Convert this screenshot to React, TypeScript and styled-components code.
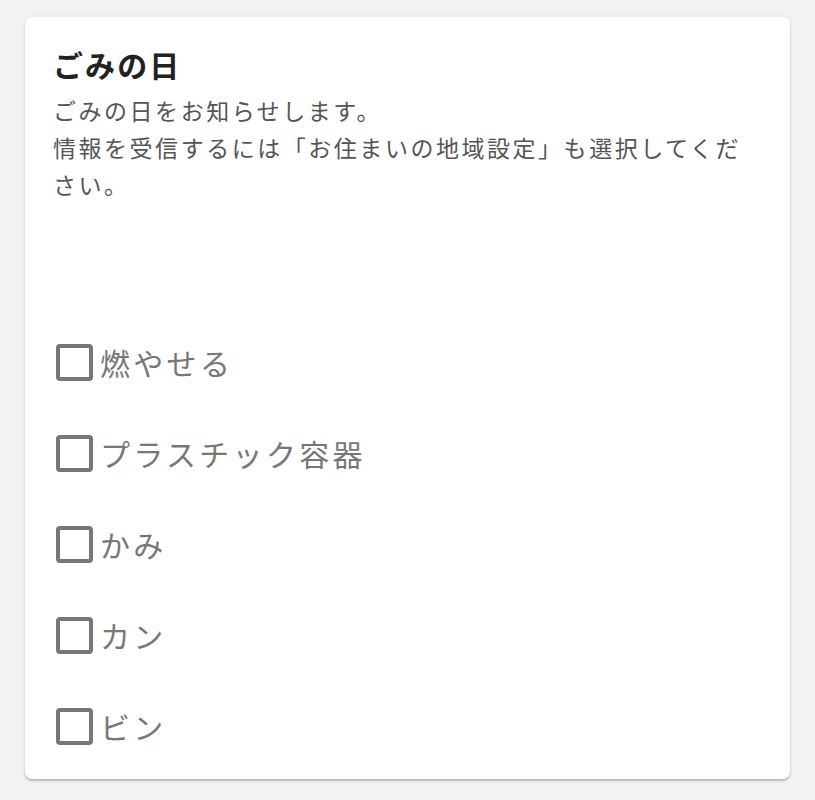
import React from 'react';
import styled, { createGlobalStyle } from 'styled-components';

const GlobalStyle = createGlobalStyle`
  html, body {
    margin: 0;
    background: #f1f2f4;
    font-family: "Noto Sans CJK JP", "Noto Sans", sans-serif;
  }
`;

const Page = styled.main`
  padding: 17px 25px 20px;
`;

const Card = styled.section`
  background: #fff;
  border-radius: 7px;
  padding: 28px 30px 34px 28px;
  box-shadow: 0 2px 2px rgba(0, 0, 0, 0.22), 0 0 6px rgba(0, 0, 0, 0.05);
`;

const Title = styled.h2`
  margin: 0 0 8px;
  font-size: 30px;
  line-height: 39px;
  font-weight: 700;
  color: #222;
  letter-spacing: 0.07em;
`;

const Description = styled.p`
  margin: 0;
  font-size: 23px;
  line-height: 37px;
  color: #555;
  letter-spacing: 0.11em;
`;

const OptionList = styled.ul`
  list-style: none;
  margin: 141px 0 0;
  padding: 0 0 0 3px;
  display: flex;
  flex-direction: column;
  gap: 54px;
`;

const Option = styled.li`
  display: flex;
  align-items: center;
  gap: 7px;
  height: 37px;
`;

const Box = styled.input.attrs({ type: 'checkbox' })`
  appearance: none;
  margin: 0;
  width: 37px;
  height: 37px;
  box-sizing: border-box;
  border: 4px solid #777;
  border-radius: 4px;
  background: #fff;
  cursor: pointer;
`;

const Label = styled.label`
  font-size: 30px;
  line-height: 37px;
  color: #777;
  letter-spacing: 0.11em;
  cursor: pointer;
`;

const items = ['燃やせる', 'プラスチック容器', 'かみ', 'カン', 'ビン'];

const App = (): React.ReactElement => {
  return (
    <Page>
      <GlobalStyle />
      <Card>
        <Title>ごみの日</Title>
        <Description>
          ごみの日をお知らせします。
          <br />
          情報を受信するには「お住まいの地域設定」も選択してください。
        </Description>
        <OptionList>
          {items.map((item, i) => (
            <Option key={item}>
              <Box id={`garbage-${i}`} />
              <Label htmlFor={`garbage-${i}`}>{item}</Label>
            </Option>
          ))}
        </OptionList>
      </Card>
    </Page>
  );
};

export default App;
